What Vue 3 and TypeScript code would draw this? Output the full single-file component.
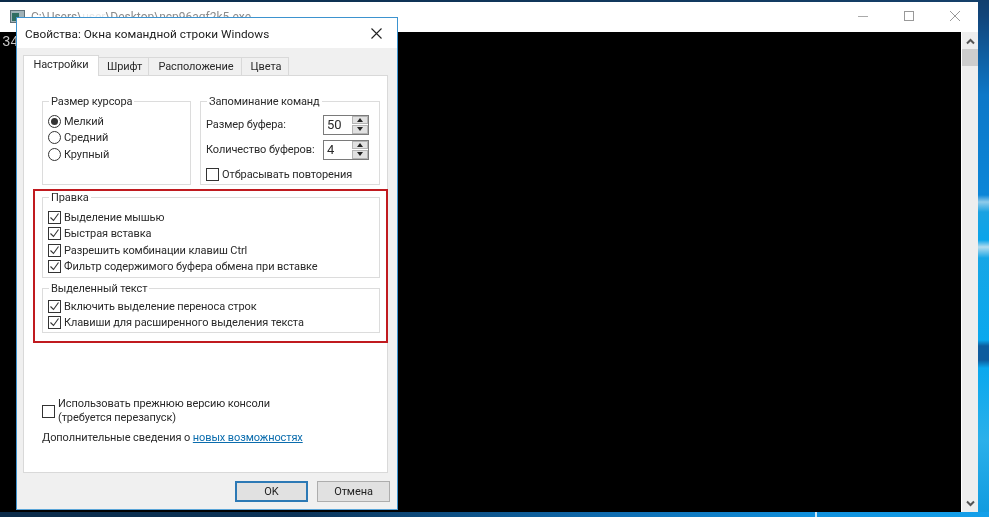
<script setup lang="ts">
const tabs = [
  { label: 'Настройки', w: 76 },
  { label: 'Шрифт', w: 50 },
  { label: 'Расположение', w: 93 },
  { label: 'Цвета', w: 47 },
]
const cursors = ['Мелкий', 'Средний', 'Крупный']
const editing = [
  'Выделение мышью',
  'Быстрая вставка',
  'Разрешить комбинации клавиш Ctrl',
  'Фильтр содержимого буфера обмена при вставке',
]
const selection = ['Включить выделение переноса строк', 'Клавиши для расширенного выделения текста']
const spinners = [
  { label: 'Размер буфера:', value: '50' },
  { label: 'Количество буферов:', value: '4' },
]
</script>

<template>
  <div class="desktop">
    <section class="console">
      <header class="console-bar">
        <svg class="console-icon" width="15" height="13" viewBox="0 0 15 13">
          <rect x="0.5" y="0.5" width="14" height="12" fill="#9fb2b8" stroke="#5d7078" />
          <rect x="2" y="3" width="7" height="8" fill="#2f6d62" />
        </svg>
        <span class="console-title">C:\Users\<span class="smudge">user</span>\Desktop\ncp96agf2k5.exe</span>
        <div class="controls">
          <svg width="10" height="10" viewBox="0 0 10 10"><path d="M0 5.5h10" stroke="#aaa" /></svg>
          <svg width="10" height="10" viewBox="0 0 10 10"><rect x="0.5" y="0.5" width="9" height="9" fill="none" stroke="#999" /></svg>
          <svg width="10" height="10" viewBox="0 0 10 10"><path d="M0 0l10 10M10 0L0 10" stroke="#999" /></svg>
        </div>
      </header>
      <div class="console-body">
        <div class="screen"><span class="screen-text">34</span></div>
        <div class="scrollbar">
          <svg width="9" height="7" viewBox="0 0 9 7"><path d="M1 5.5l3.5-3.5L8 5.5" fill="none" stroke="#555" stroke-width="2" /></svg>
          <div class="thumb"></div>
          <div class="track"></div>
          <svg width="9" height="7" viewBox="0 0 9 7"><path d="M1 1.5L4.5 5 8 1.5" fill="none" stroke="#555" stroke-width="2" /></svg>
        </div>
      </div>
    </section>

    <section class="dialog">
      <header class="dialog-bar">
        <span>Свойства: Окна командной строки Windows</span>
        <svg width="11" height="11" viewBox="0 0 11 11"><path d="M0.5 0.5l10 10M10.5 0.5l-10 10" stroke="#222" stroke-width="1.1" /></svg>
      </header>

      <div class="dialog-body">
        <nav class="tabs">
          <div
            v-for="(tab, i) in tabs"
            :key="tab.label"
            class="tab"
            :class="{ active: i === 0 }"
            :style="{ width: tab.w + 'px' }"
          >{{ tab.label }}</div>
        </nav>

        <div class="panel">
          <div class="top-row">
            <fieldset class="group cursor-group">
              <legend>Размер курсора</legend>
              <label v-for="(c, i) in cursors" :key="c" class="option">
                <span class="radio" :class="{ on: i === 0 }"></span>{{ c }}
              </label>
            </fieldset>
            <fieldset class="group memory-group">
              <legend>Запоминание команд</legend>
              <div v-for="s in spinners" :key="s.label" class="spin-row">
                <span>{{ s.label }}</span>
                <div class="spinner">
                  <span class="spin-value">{{ s.value }}</span>
                  <div class="spin-btns">
                    <span class="spin-btn"><i class="up"></i></span>
                    <span class="spin-btn"><i class="down"></i></span>
                  </div>
                </div>
              </div>
              <label class="option dedupe"><span class="check"></span>Отбрасывать повторения</label>
            </fieldset>
          </div>

          <div class="highlight">
            <fieldset class="group edit-group">
              <legend>Правка</legend>
              <label v-for="t in editing" :key="t" class="option">
                <span class="check">
                  <svg width="11" height="11" viewBox="0 0 11 11"><path d="M1.5 5.5l3 3 5-7" fill="none" stroke="#333" stroke-width="1.1" /></svg>
                </span>{{ t }}
              </label>
            </fieldset>
            <fieldset class="group select-group">
              <legend>Выделенный текст</legend>
              <label v-for="t in selection" :key="t" class="option">
                <span class="check">
                  <svg width="11" height="11" viewBox="0 0 11 11"><path d="M1.5 5.5l3 3 5-7" fill="none" stroke="#333" stroke-width="1.1" /></svg>
                </span>{{ t }}
              </label>
            </fieldset>
          </div>

          <label class="legacy">
            <span class="check"></span>
            <span>Использовать прежнюю версию консоли<br />(требуется перезапуск)</span>
          </label>
          <p class="more">Дополнительные сведения о <a href="#" class="link">новых возможностях</a></p>
        </div>

        <footer class="actions">
          <button class="btn primary" type="button">OK</button>
          <button class="btn" type="button">Отмена</button>
        </footer>
      </div>
    </section>
  </div>
</template>

<style scoped>
.desktop {
  position: relative;
  width: 989px;
  height: 517px;
  overflow: hidden;
  background-color: #0f4c84;
  background-image:
    linear-gradient(#cfe6f5, #cfe6f5),
    linear-gradient(90deg, #0a2a48 0%, #0b3358 30%, #0f6cb0 62%, #1090dc 82%, #14a0ea 100%),
    linear-gradient(180deg, #123f6e 0%, #12457a 16px, #0d78c8 95px, #0b86d8 195px, #8fcbea 202px, #1aa2e2 212px, #0aa4ea 240px, #b4dcee 247px, #16a6e6 258px, #0aa8ee 340px, #0d5c9e 346px, #0d5c9e 360px, #0aa8ee 368px, #2bb0ea 440px, #109adf 517px),
    linear-gradient(90deg, #0a2a48 0%, #15406a 100%);
  background-repeat: no-repeat;
  background-size: 2px 5px, 100% 5px, 11px 100%, 100% 2px;
  background-position: 815px bottom, left bottom, right top, left top;
  font-family: "Roboto", "Liberation Sans", sans-serif;
  font-size: 11px;
  letter-spacing: -0.1px;
  color: #2a2a2a;
  filter: blur(0.3px);
}
.console {
  position: absolute;
  left: 0;
  top: 2px;
  width: 978px;
  height: 510px;
  display: flex;
  flex-direction: column;
  background: #fff;
}
.console-bar {
  height: 30px;
  flex: none;
  display: flex;
  align-items: flex-start;
  padding: 8px 0 0 10px;
  box-sizing: border-box;
  color: #8b8b8b;
  font-size: 12px;
  letter-spacing: 0;
}
.console-icon { margin-right: 6px; }
.console-title { line-height: 14px; }
.smudge { color: #e8e8e8; }
.controls {
  margin-left: auto;
  display: flex;
  gap: 36px;
  padding: 1px 18px 0 0;
}
.console-body { flex: 1; display: flex; min-height: 0; }
.screen { flex: 1; background: #000; }
.screen-text {
  display: block;
  padding: 2px 0 0 2px;
  font-size: 14px;
  line-height: 16px;
  color: #c8c8c8;
  font-family: "Liberation Mono", monospace;
}
.scrollbar {
  width: 16px;
  flex: none;
  margin-left: 1px;
  background: #eeeeee;
  display: flex;
  flex-direction: column;
  align-items: center;
  padding: 6px 0 5px;
  box-sizing: border-box;
}
.thumb { width: 100%; height: 17px; margin-top: 4px; background: #cdcdcd; flex: none; }
.track { flex: 1; }

.dialog {
  position: absolute;
  left: 16px;
  top: 17px;
  width: 382px;
  height: 493px;
  box-sizing: border-box;
  border: 1px solid #3d93cf;
  border-bottom-color: #5aa5d8;
  background: #fff;
  display: flex;
  flex-direction: column;
}
.dialog-bar {
  height: 30px;
  flex: none;
  box-sizing: border-box;
  padding: 1px 15px 0 8px;
  display: flex;
  align-items: center;
  justify-content: space-between;
  font-size: 11.8px;
  letter-spacing: 0;
  color: #222;
}
.dialog-body {
  flex: 1;
  background: #f0f0f0;
  padding: 7px 0 0 6px;
  display: flex;
  flex-direction: column;
  min-height: 0;
}
.tabs { display: flex; align-items: flex-end; height: 20px; flex: none; }
.tab {
  box-sizing: border-box;
  height: 18px;
  border: 1px solid #d9d9d9;
  border-bottom: 0;
  border-left-width: 0;
  background: #f0f0f0;
  text-align: center;
  line-height: 18px;
  padding-left: 2px;
}
.tab.active {
  height: 21px;
  margin-bottom: -1px;
  border-left-width: 1px;
  background: #fff;
  position: relative;
  z-index: 1;
  line-height: 18px;
  padding-left: 0;
}
.panel {
  box-sizing: border-box;
  width: 365px;
  height: 398px;
  flex: none;
  background: #fff;
  border: 1px solid #d9d9d9;
  padding: 17px 0 0 18px;
  display: flex;
  flex-direction: column;
}
.top-row { display: flex; gap: 9px; }
.group {
  margin: 0;
  padding: 0 0 0 5px;
  border: 1px solid #dcdcdc;
  min-width: 0;
  box-sizing: border-box;
}
.group legend {
  padding: 2px 2px 0;
  margin-left: 1px;
  line-height: 14px;
}
.cursor-group { width: 149px; height: 92px; padding-top: 4px; }
.memory-group { width: 180px; height: 92px; padding-top: 3px; }
.option {
  display: flex;
  align-items: center;
  gap: 3px;
  height: 16.5px;
}
.radio {
  width: 13px;
  height: 13px;
  box-sizing: border-box;
  border: 1px solid #333;
  border-radius: 50%;
  background: #fff;
  display: block;
  position: relative;
  flex: none;
}
.radio.on::after {
  content: "";
  position: absolute;
  inset: 2px;
  border-radius: 50%;
  background: #333;
}
.check {
  width: 13px;
  height: 13px;
  box-sizing: border-box;
  border: 1px solid #333;
  background: #fff;
  flex: none;
  display: flex;
}
.spin-row {
  display: flex;
  align-items: center;
  justify-content: space-between;
  height: 25px;
  padding-right: 10px;
}
.spinner {
  box-sizing: border-box;
  width: 46px;
  height: 20px;
  border: 1px solid #7a7a7a;
  background: #fff;
  display: flex;
}
.spin-value { flex: 1; padding-left: 3px; line-height: 18px; font-size: 13px; }
.spin-btns { width: 16px; display: flex; flex-direction: column; gap: 1px; background: #fff; }
.spin-btn { flex: 1; background: #e1e1e1; border: 1px solid #b4b4b4; display: flex; align-items: center; justify-content: center; }
.up { border: 3px solid transparent; border-top: 0; border-bottom: 4px solid #222; }
.down { border: 3px solid transparent; border-bottom: 0; border-top: 4px solid #222; }
.dedupe { margin-top: 3px; height: 18px; }

.highlight {
  box-sizing: border-box;
  width: 355px;
  margin: 4px 0 0 -9px;
  height: 154px;
  border: 2px solid #c01a1f;
  padding: 0 0 0 7px;
  flex: none;
}
.highlight .group legend { padding-top: 2px; line-height: 10px; }
.edit-group { width: 338px; height: 87px; padding-top: 6px; }
.select-group { width: 338px; height: 51px; margin-top: 4px; padding-top: 4px; }

.legacy {
  display: flex;
  align-items: center;
  gap: 3px;
  margin-top: 54px;
  line-height: 14px;
}
.more { margin: 5px 0 0; line-height: 16px; }
.link { color: #0a6cad; }

.actions {
  display: flex;
  justify-content: flex-end;
  gap: 9px;
  padding: 8px 7px 0 0;
}
.btn {
  box-sizing: border-box;
  width: 73px;
  height: 21px;
  padding: 0;
  border: 1px solid #adadad;
  background: #e1e1e1;
  font: inherit;
  letter-spacing: inherit;
  color: #222;
}
.btn.primary { border: 2px solid #2c79b5; }
</style>
